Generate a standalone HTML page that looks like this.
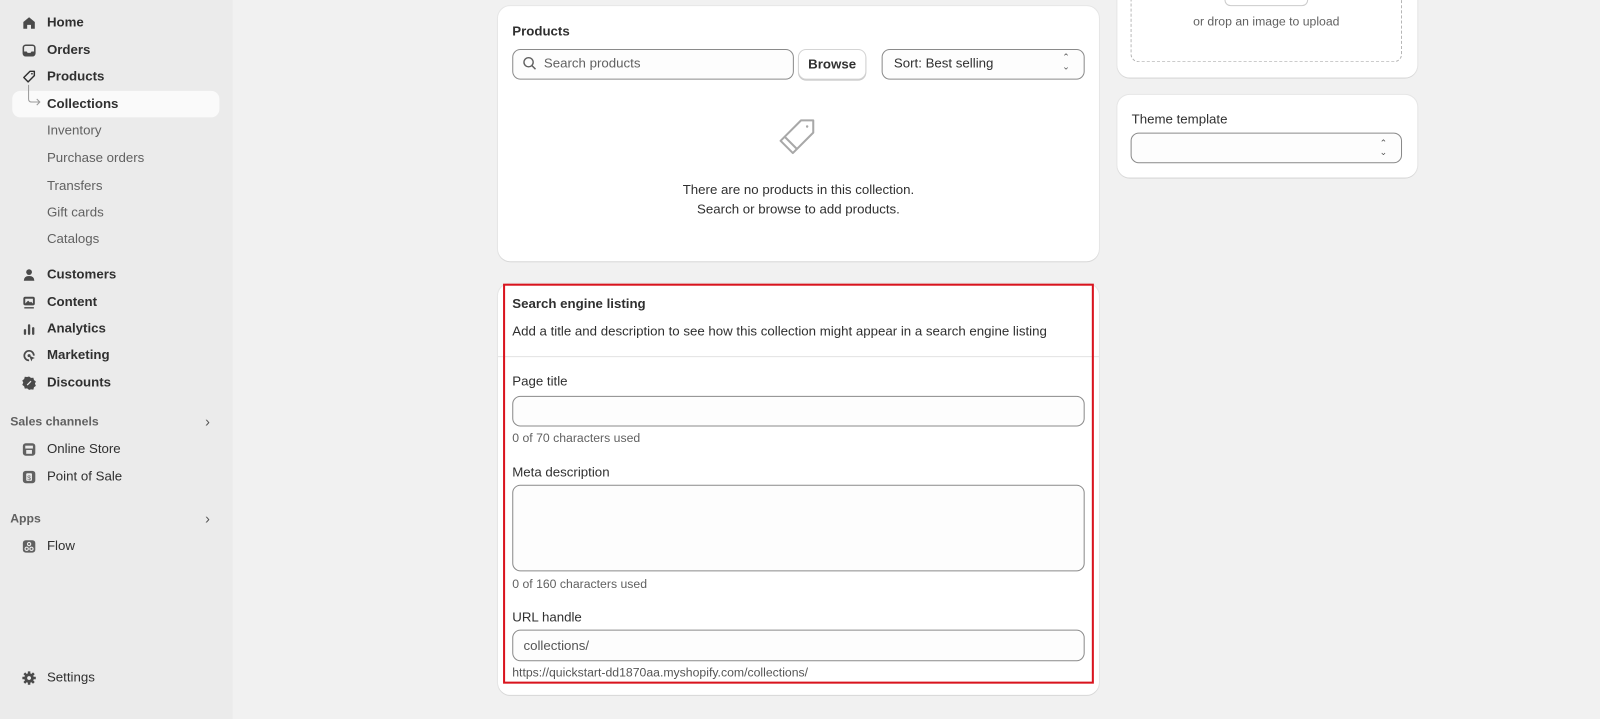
<!DOCTYPE html>
<html><head><meta charset="utf-8"><style>
*{box-sizing:border-box;margin:0;padding:0}
body{width:1600px;height:705px;background:#f1f1f1;font-family:"Liberation Sans",sans-serif;font-size:13px;color:#303030;overflow:hidden}
#w{position:relative;width:1568px;height:691px;transform:scale(1.0204);transform-origin:0 0}
.sb{position:absolute;left:0;top:0;width:228px;height:705px;background:#ebebeb}
.it{position:absolute;left:46px;font-size:13px;color:#303030;font-weight:600;line-height:16px}
.sub{position:absolute;left:46px;color:#616161;font-weight:500;line-height:16px}
.ic{position:absolute;left:21px;width:15px;height:15px}
.hdr{position:absolute;left:10px;font-size:12px;font-weight:700;color:#616161}
.chev{position:absolute;left:201px;color:#555;font-size:14px}
.card{position:absolute;background:#fff;border-radius:12px;box-shadow:0 1px 0 #d8d8d8,0 0 0 1px #e6e6e6}
.inp{position:absolute;border:1px solid #8a8a8a;border-radius:8px;background:#fdfdfd}
.lbl{position:absolute;left:502px;font-size:13px;color:#303030}
.help{position:absolute;left:502px;font-size:12px;color:#616161}
</style></head><body><div id="w">
<div class="sb">
<div style="position:absolute;left:12px;top:89px;width:203px;height:26px;background:#fafafa;border-radius:8px"></div>
<svg class="ic" style="top:15px" viewBox="0 0 16 16"><path d="M2 7L8 2l6 5v7H10V10H6v4H2z" fill="#4a4a4a"/></svg>
<div class="it" style="top:14px">Home</div>
<svg class="ic" style="top:42px" viewBox="0 0 16 16"><rect x="2" y="2.5" width="12" height="11" rx="2.5" fill="none" stroke="#4a4a4a" stroke-width="1.6"/><path d="M2 9h3.5l1 1.5h3l1-1.5H14v4H2z" fill="#4a4a4a"/></svg>
<div class="it" style="top:41px">Orders</div>
<svg class="ic" style="top:68px" viewBox="0 0 16 16"><path d="M9 2h4.5v4.5L7 13 2.5 8.5z" fill="none" stroke="#303030" stroke-width="1.5" stroke-linejoin="round"/><circle cx="11" cy="4.6" r=".9" fill="#303030"/></svg>
<div class="it" style="top:67px">Products</div>
<svg style="position:absolute;left:26px;top:83px" width="16" height="22"><path d="M2 0v14q0 3 3 3h8M10 14l3 3-3 3" fill="none" stroke="#999" stroke-width="1"/></svg>
<div class="it" style="top:94px">Collections</div>
<div class="sub" style="top:120px">Inventory</div>
<div class="sub" style="top:147px">Purchase orders</div>
<div class="sub" style="top:174px">Transfers</div>
<div class="sub" style="top:200px">Gift cards</div>
<div class="sub" style="top:226px">Catalogs</div>
<svg class="ic" style="top:262px" viewBox="0 0 16 16"><circle cx="8" cy="5" r="3" fill="#4a4a4a"/><path d="M2.5 14q0-5 5.5-5t5.5 5z" fill="#4a4a4a"/></svg>
<div class="it" style="top:261px">Customers</div>
<svg class="ic" style="top:289px" viewBox="0 0 16 16"><rect x="2" y="2" width="12" height="9" rx="2" fill="#4a4a4a"/><rect x="4" y="4" width="8" height="5" fill="#ebebeb"/><path d="M4 9l3-3 2 2 1-1 2 2z" fill="#4a4a4a"/><path d="M3 13.5h10" stroke="#4a4a4a" stroke-width="1.5"/></svg>
<div class="it" style="top:288px">Content</div>
<svg class="ic" style="top:315px" viewBox="0 0 16 16"><rect x="2.5" y="8" width="2.4" height="6" rx="1" fill="#4a4a4a"/><rect x="6.8" y="3" width="2.4" height="11" rx="1" fill="#4a4a4a"/><rect x="11.1" y="6" width="2.4" height="8" rx="1" fill="#4a4a4a"/></svg>
<div class="it" style="top:314px">Analytics</div>
<svg class="ic" style="top:341px" viewBox="0 0 16 16"><path d="M13 8a5 5 0 1 0-5 5" fill="none" stroke="#4a4a4a" stroke-width="1.8"/><circle cx="8" cy="8" r="1.6" fill="#4a4a4a"/><path d="M8 8l6 2.5-2.5 1 -1 2.5z" fill="#4a4a4a"/></svg>
<div class="it" style="top:340px">Marketing</div>
<svg class="ic" style="top:368px" viewBox="0 0 16 16"><path d="M8 1l2 1.5 2.5-.2.6 2.4 2 1.5-1 2.3 1 2.3-2 1.5-.6 2.4-2.5-.2L8 15l-2-1.5-2.5.2-.6-2.4-2-1.5 1-2.3-1-2.3 2-1.5.6-2.4 2.5.2z" fill="#4a4a4a"/><path d="M6 10l4-4" stroke="#ebebeb" stroke-width="1.3"/></svg>
<div class="it" style="top:367px">Discounts</div>
<div class="hdr" style="top:406px">Sales channels</div><div class="chev" style="top:405px">›</div>
<svg class="ic" style="top:433px" viewBox="0 0 16 16"><rect x="1.5" y="1.5" width="13" height="13" rx="3" fill="#616161"/><rect x="4" y="4" width="8" height="3" fill="#ebebeb"/><rect x="5" y="8.5" width="6" height="4" fill="#ebebeb"/></svg>
<div class="it" style="top:432px;font-weight:500">Online Store</div>
<svg class="ic" style="top:460px" viewBox="0 0 16 16"><rect x="1.5" y="1.5" width="13" height="13" rx="3" fill="#616161"/><rect x="5" y="4" width="6" height="8" rx="1" fill="#ebebeb"/><text x="8" y="11" font-size="7" text-anchor="middle" fill="#616161">$</text></svg>
<div class="it" style="top:459px;font-weight:500">Point of Sale</div>
<div class="hdr" style="top:501px">Apps</div><div class="chev" style="top:500px">›</div>
<svg class="ic" style="top:528px" viewBox="0 0 16 16"><rect x="1.5" y="1.5" width="13" height="13" rx="3" fill="#616161"/><circle cx="8" cy="5.5" r="1.7" fill="none" stroke="#ebebeb" stroke-width="1.2"/><circle cx="5.5" cy="10.5" r="1.7" fill="none" stroke="#ebebeb" stroke-width="1.2"/><circle cx="10.5" cy="10.5" r="1.7" fill="none" stroke="#ebebeb" stroke-width="1.2"/></svg>
<div class="it" style="top:527px;font-weight:500">Flow</div>
<svg class="ic" style="top:657px" viewBox="0 0 16 16"><circle cx="8" cy="8" r="5" fill="#4a4a4a"/><path d="M8 1v14M1 8h14M3 3l10 10M13 3L3 13" stroke="#4a4a4a" stroke-width="2.6"/><circle cx="8" cy="8" r="2" fill="#ebebeb"/></svg>
<div class="it" style="top:656px;font-weight:500">Settings</div>
</div>

<div class="card" style="left:488px;top:6px;width:589px;height:250px"></div>
<div style="position:absolute;left:502px;top:23px;font-weight:700;font-size:13px">Products</div>
<div class="inp" style="left:502px;top:48px;width:276px;height:30px"></div>
<svg style="position:absolute;left:512px;top:55px" width="14" height="14"><circle cx="6" cy="6" r="4.5" fill="none" stroke="#616161" stroke-width="1.4"/><path d="M9.3 9.3l3.5 3.5" stroke="#616161" stroke-width="1.4"/></svg>
<div style="position:absolute;left:533px;top:54px;color:#616161">Search products</div>
<div style="position:absolute;left:782px;top:48px;width:67px;height:30px;border:1px solid #d4d4d4;border-radius:8px;background:#fff;box-shadow:0 1px 0 #c8c8c8;text-align:center;line-height:28px;font-weight:600">Browse</div>
<div class="inp" style="left:864px;top:48px;width:199px;height:30px"></div>
<div style="position:absolute;left:876px;top:54px">Sort: Best selling</div>
<div style="position:absolute;left:1041px;top:52px;font-size:9px;line-height:9px;color:#555">⌃<br>⌄</div>
<svg style="position:absolute;left:763px;top:116px" width="40" height="40" viewBox="0 0 40 40"><path d="M22 2h12v12L14 34 2 22z" fill="none" stroke="#a8a8a8" stroke-width="2" stroke-linejoin="round"/><path d="M6 18l12 12" stroke="#a8a8a8" stroke-width="2"/><circle cx="28" cy="8" r="1.2" fill="#a8a8a8"/></svg>
<div style="position:absolute;left:488px;width:589px;top:176px;text-align:center;line-height:19px">There are no products in this collection.<br>Search or browse to add products.</div>

<div class="card" style="left:488px;top:278px;width:589px;height:403px"></div>
<div style="position:absolute;left:488px;top:349px;width:589px;height:1px;background:#e3e3e3"></div>
<div style="position:absolute;left:502px;top:290px;font-weight:700">Search engine listing</div>
<div style="position:absolute;left:502px;top:317px">Add a title and description to see how this collection might appear in a search engine listing</div>
<div class="lbl" style="top:366px">Page title</div>
<div class="inp" style="left:502px;top:388px;width:561px;height:30px"></div>
<div class="help" style="top:422px">0 of 70 characters used</div>
<div class="lbl" style="top:455px">Meta description</div>
<div class="inp" style="left:502px;top:475px;width:561px;height:85px"></div>
<div class="help" style="top:565px">0 of 160 characters used</div>
<div class="lbl" style="top:597px">URL handle</div>
<div class="inp" style="left:502px;top:617px;width:561px;height:31px"></div>
<div style="position:absolute;left:513px;top:625px;color:#555">collections/</div>
<div class="help" style="top:652px;color:#555">https://quickstart-dd1870aa.myshopify.com/collections/</div>
<div style="position:absolute;left:493px;top:278px;width:579px;height:392px;border:2px solid #d9141e"></div>

<div class="card" style="left:1095px;top:-20px;width:294px;height:96px"></div>
<div style="position:absolute;left:1108px;top:-10px;width:266px;height:71px;border:1px dashed #b5b5b5;border-radius:8px"></div>
<div style="position:absolute;left:1200px;top:-10px;width:82px;height:16px;border:1px solid #ccc;border-radius:6px;background:#fff"></div>
<div style="position:absolute;left:1108px;width:266px;top:14px;text-align:center;font-size:12px;color:#616161">or drop an image to upload</div>
<div class="card" style="left:1095px;top:93px;width:294px;height:81px"></div>
<div style="position:absolute;left:1109px;top:109px">Theme template</div>
<div class="inp" style="left:1108px;top:130px;width:266px;height:30px"></div>
<div style="position:absolute;left:1352px;top:136px;font-size:9px;line-height:9px;color:#555">⌃<br>⌄</div>
</div></body></html>
